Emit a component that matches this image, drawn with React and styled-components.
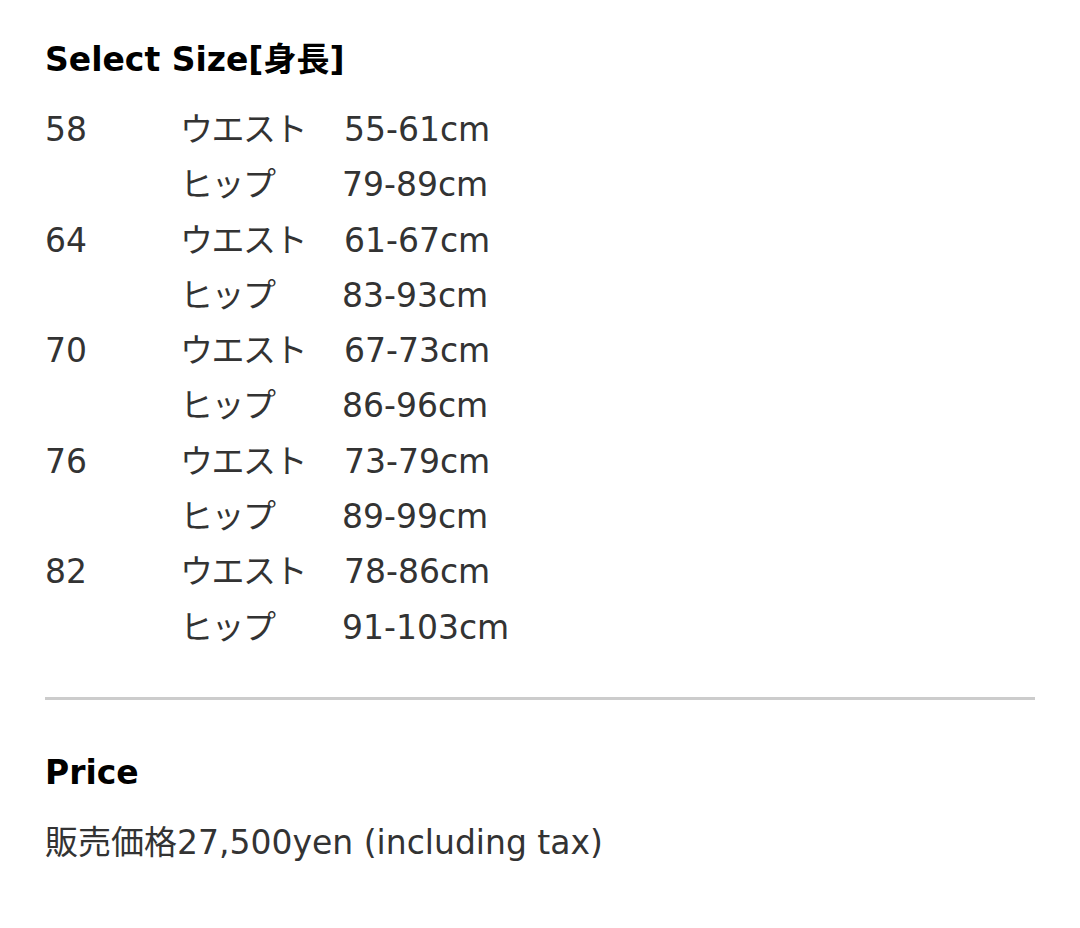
import styled, { createGlobalStyle } from 'styled-components';

const GlobalStyle = createGlobalStyle`
	body {
		margin: 0;
		background: #fff;
		font-family: 'DejaVu Sans', Verdana, 'Noto Sans CJK JP', sans-serif;
	}
`;

const Page = styled.div`
	padding: 40px 45px 0 45px;
	width: 990px;
`;

const Heading = styled.h2`
	margin: 0;
	font-size: 33px;
	line-height: 40px;
	font-weight: bold;
	color: #000;
`;

const SizeTable = styled.div`
	display: grid;
	grid-template-columns: 135px 164px auto;
	margin-top: 22px;
	font-size: 33px;
	line-height: 55.3px;
	color: #333;
`;

const Cell = styled.div`
	margin-left: ${(props) => props.$shift || 0}px;
	white-space: nowrap;
`;

const Label = styled(Cell)`
	letter-spacing: -1.5px;
`;

const Divider = styled.hr`
	margin: 42px 0 0 0;
	border: none;
	height: 3px;
	background: #cccccc;
`;

const Price = styled.div`
	margin-top: 53px;
`;

const PriceText = styled.p`
	margin: 30px 0 0 0;
	font-size: 33px;
	line-height: 40px;
	color: #333;
`;

const sizes = [
	{ size: '58', waist: '55-61cm', hip: '79-89cm' },
	{ size: '64', waist: '61-67cm', hip: '83-93cm' },
	{ size: '70', waist: '67-73cm', hip: '86-96cm' },
	{ size: '76', waist: '73-79cm', hip: '89-99cm' },
	{ size: '82', waist: '78-86cm', hip: '91-103cm' },
];

const App = () => {
	return (
		<Page>
			<GlobalStyle />
			<Heading>Select Size[身長]</Heading>
			<SizeTable>
				{sizes.map((s) => (
					<>
						<Cell key={s.size + 'n'}>{s.size}</Cell>
						<Label key={s.size + 'wl'}>ウエスト</Label>
						<Cell key={s.size + 'wv'}>{s.waist}</Cell>
						<Cell key={s.size + 'e'} />
						<Label key={s.size + 'hl'}>ヒップ</Label>
						<Cell key={s.size + 'hv'} $shift={-2}>{s.hip}</Cell>
					</>
				))}
			</SizeTable>
			<Divider />
			<Price>
				<Heading>Price</Heading>
				<PriceText>販売価格27,500yen (including tax)</PriceText>
			</Price>
		</Page>
	);
};

export default App;
